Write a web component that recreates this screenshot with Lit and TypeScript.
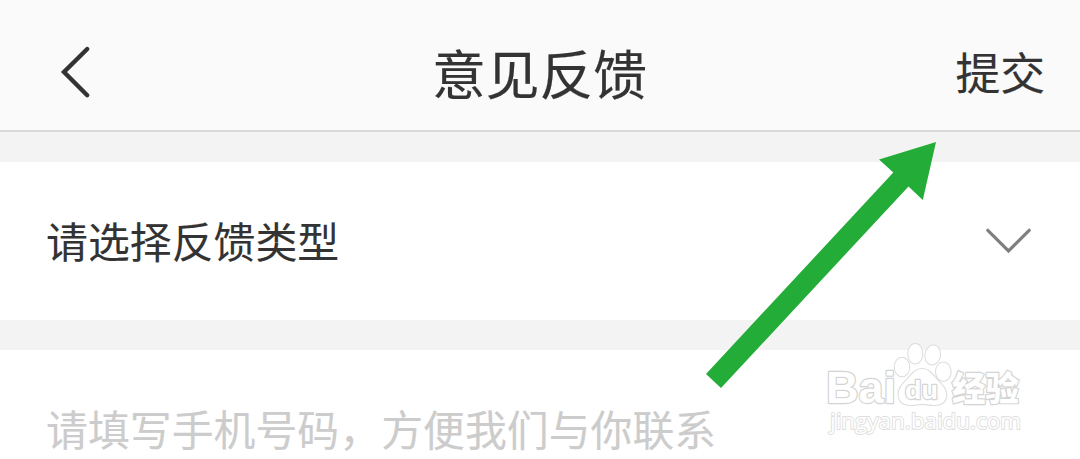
import { css, html, LitElement } from "lit";
import { customElement, property } from "lit/decorators.js";

@customElement('feedback-header')
export class FeedbackHeader extends LitElement {
    static styles = css`
        :host {
            display: grid;
            grid-template-columns: 1fr auto 1fr;
            align-items: center;
            box-sizing: border-box;
            height: 132px;
            padding: 12px 35px 0 58px;
            background-color: #fafafa;
            border-bottom: 2px solid #d8d8d8;
            color: #333;
        }
        .back {
            display: block;
            width: 36px;
            height: 56px;
            margin-top: 2px;
        }
        .title {
            margin: 2px 0 0 -24px;
            font-size: 53.8px;
            line-height: 80px;
            -webkit-text-stroke: 0.2px #333;
        }
        .submit {
            justify-self: end;
            font-size: 44.8px;
            line-height: 80px;
            -webkit-text-stroke: 0.2px #333;
        }
    `;

    @property({ type: String }) heading = '';
    @property({ type: String }) action = '';

    render() {
        return html`
            <svg class="back" viewBox="0 0 36 56" fill="none" stroke="#333" stroke-width="4.4" stroke-linecap="round">
                <path d="M29.2 5 L6 28 L29.2 51.2" />
            </svg>
            <span class="title">${this.heading}</span>
            <span class="submit">${this.action}</span>
        `;
    }
}

@customElement('baidu-watermark')
export class BaiduWatermark extends LitElement {
    static styles = css`
        :host {
            display: block;
        }
        svg {
            display: block;
        }
        .mark {
            fill: #fff;
            stroke: #d4d4d4;
            stroke-width: 2.4;
            stroke-linejoin: round;
            paint-order: stroke;
        }
        .paw {
            stroke: #dcdcdc;
            stroke-width: 2;
        }
        .latin {
            font-family: "Liberation Sans", sans-serif;
            font-weight: 700;
        }
        .han {
            font-family: "Noto Sans CJK SC", sans-serif;
            font-weight: 900;
        }
        .url {
            font-family: "Open Sans", "Noto Sans", sans-serif;
            stroke: #dedede;
            stroke-width: 1.8;
        }
    `;

    render() {
        return html`
            <svg width="210" height="110" viewBox="0 0 210 110">
                <text class="mark latin" x="6" y="63" font-size="45" textLength="70" lengthAdjust="spacingAndGlyphs">Bai</text>
                <g class="mark paw">
                    <ellipse cx="82" cy="27" rx="7.3" ry="9.3" />
                    <ellipse cx="95.3" cy="13.7" rx="7" ry="9.8" />
                    <ellipse cx="112.7" cy="15" rx="7.3" ry="9.5" transform="rotate(8 112.7 15)" />
                    <ellipse cx="123.3" cy="31.7" rx="7.3" ry="9.3" />
                    <path d="M102 29 C110 29 114 37 121 44 C130 53 127 65 115 65 C109 65 107 64 102 64 C97 64 96 65 90 65 C78 65 75 53 83 44 C90 37 94 29 102 29 Z" />
                </g>
                <text class="mark latin" x="85" y="58.5" font-size="26" textLength="33" lengthAdjust="spacingAndGlyphs">du</text>
                <text class="mark han" x="132" y="60.5" font-size="34" textLength="67" lengthAdjust="spacingAndGlyphs">经验</text>
                <text class="mark url" x="10" y="89" font-size="22" textLength="191" lengthAdjust="spacingAndGlyphs">jingyan.baidu.com</text>
            </svg>
        `;
    }
}

@customElement('app-root')
export class AppRoot extends LitElement {
    static styles = css`
        :host {
            display: block;
            position: relative;
            height: 459px;
            overflow: hidden;
            background-color: #f3f3f3;
            font-family: "Noto Sans CJK SC", sans-serif;
        }
        .page {
            display: flex;
            flex-direction: column;
            gap: 30px;
        }
        .row {
            display: flex;
            align-items: center;
            justify-content: space-between;
            box-sizing: border-box;
            height: 158px;
            padding: 0 46px 2px;
            background-color: #fff;
            color: #333;
            font-size: 41.9px;
            line-height: 60px;
            -webkit-text-stroke: 0.1px currentColor;
        }
        .phone {
            color: #ccc;
        }
        .chevron {
            width: 50px;
            height: 30px;
            margin: 2px 0 0;
        }
        .arrow {
            position: absolute;
            left: 700px;
            top: 135px;
        }
        .watermark {
            position: absolute;
            left: 820px;
            top: 340px;
        }
    `;

    render() {
        return html`
            <div class="page">
                <feedback-header heading="意见反馈" action="提交"></feedback-header>
                <div class="row">
                    <span>请选择反馈类型</span>
                    <svg class="chevron" viewBox="0 0 50 30" fill="none" stroke="#808080" stroke-width="3.2" stroke-linecap="round">
                        <path d="M3.8 4.3 L24.5 25 L45.2 4.3" />
                    </svg>
                </div>
                <div class="row phone">
                    <span>请填写手机号码，方便我们与你联系</span>
                </div>
            </div>
            <svg class="arrow" width="245" height="260" viewBox="0 0 245 260">
                <path fill="#23ac38" d="M236 7 L179 24.5 L193.3 37.5 L6 239 L21 253 L208.5 51.5 L222.8 65 Z" />
            </svg>
            <baidu-watermark class="watermark"></baidu-watermark>
        `;
    }
}

declare global {
    interface HTMLElementTagNameMap {
        'feedback-header': FeedbackHeader;
        'baidu-watermark': BaiduWatermark;
        'app-root': AppRoot;
    }
}
